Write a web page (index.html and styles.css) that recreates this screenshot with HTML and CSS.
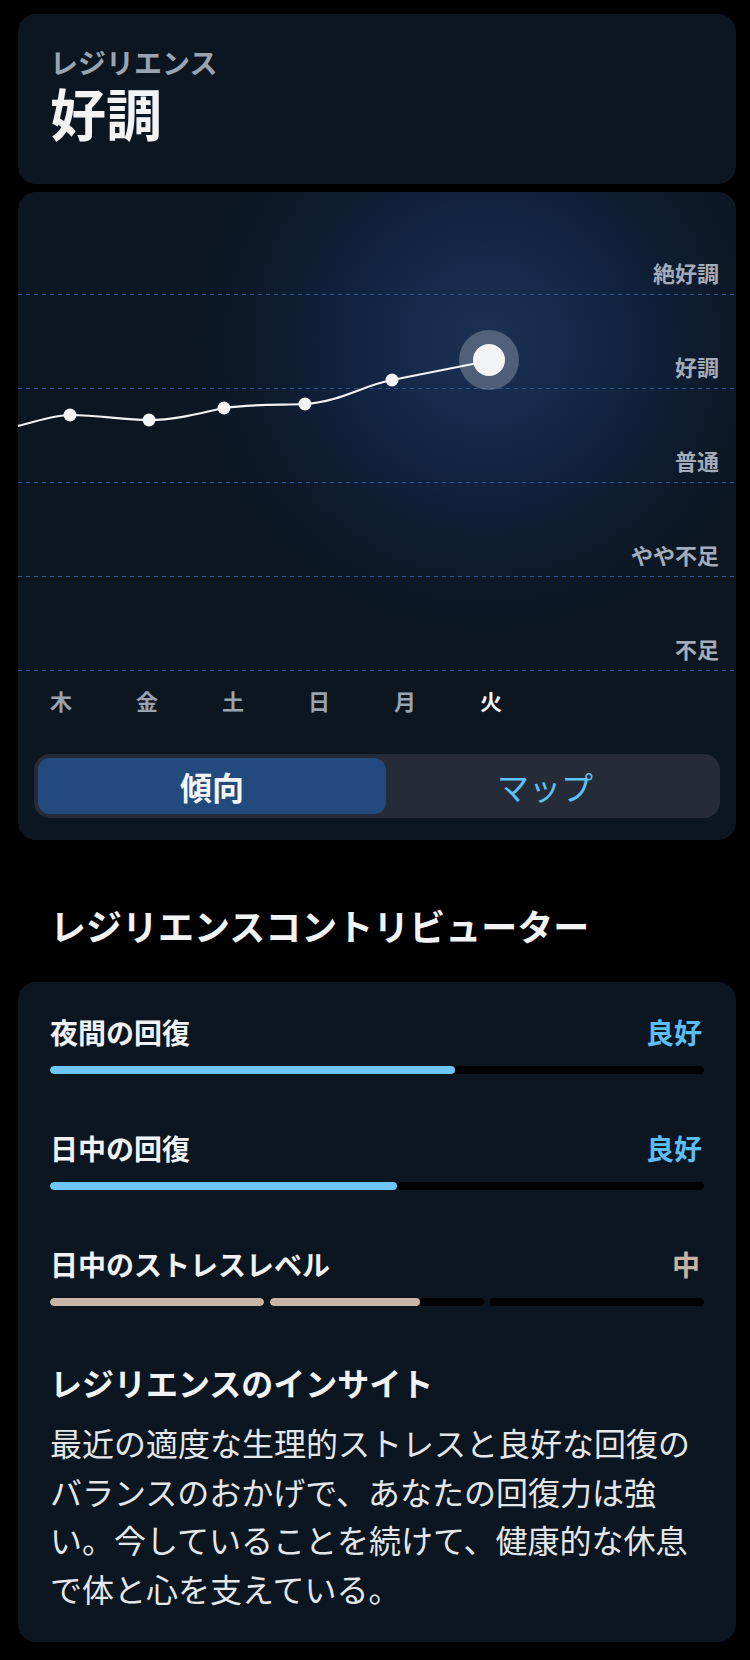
FILE: index.html
```html
<!DOCTYPE html>
<html lang="ja">
<head>
<meta charset="utf-8">
<link rel="stylesheet" href="styles.css">
</head>
<body>
<div class="page">
  <section class="card head-card">
    <div class="head-label">レジリエンス</div>
    <div class="head-value">好調</div>
  </section>

  <section class="card chart-card">
    <div class="chart">
      <div class="grid-row"><span class="grid-label">絶好調</span></div>
      <div class="grid-row"><span class="grid-label">好調</span></div>
      <div class="grid-row"><span class="grid-label">普通</span></div>
      <div class="grid-row"><span class="grid-label">やや不足</span></div>
      <div class="grid-row"><span class="grid-label">不足</span></div>
      <svg class="plot" width="718" height="500" viewBox="0 0 718 500">
        <path d="M0,234 C20,229 36,223 52,223 C82,223 104,228 131,228 C160,228 186,220 206,216 C232,212 262,213 287,212 C322,210 346,193 374,188 L470,169" fill="none" stroke="#f2f3f5" stroke-width="2.2"/>
        <circle cx="52" cy="223" r="6.5" fill="#f2f3f5"/>
        <circle cx="131" cy="228" r="6.5" fill="#f2f3f5"/>
        <circle cx="206" cy="216" r="6.5" fill="#f2f3f5"/>
        <circle cx="287" cy="212" r="6.5" fill="#f2f3f5"/>
        <circle cx="374" cy="188" r="6.5" fill="#f2f3f5"/>
        <circle cx="471" cy="168" r="30" fill="rgba(255,255,255,0.24)"/>
        <circle cx="471" cy="168" r="16" fill="#f2f3f5"/>
      </svg>
    </div>
    <div class="days">
      <span>木</span><span>金</span><span>土</span><span>日</span><span>月</span><span class="today">火</span>
    </div>
    <div class="segment">
      <div class="seg seg-active">傾向</div>
      <div class="seg seg-other">マップ</div>
    </div>
  </section>

  <h2 class="section-title">レジリエンスコントリビューター</h2>

  <section class="card contrib-card">
    <div class="metric">
      <div class="metric-top"><span class="metric-name">夜間の回復</span><span class="metric-val good">良好</span></div>
      <div class="bar"><div class="bar-fill" style="width:62%"></div></div>
    </div>
    <div class="metric">
      <div class="metric-top"><span class="metric-name">日中の回復</span><span class="metric-val good">良好</span></div>
      <div class="bar"><div class="bar-fill" style="width:53%"></div></div>
    </div>
    <div class="metric">
      <div class="metric-top"><span class="metric-name">日中のストレスレベル</span><span class="metric-val mid">中</span></div>
      <div class="seg-bars">
        <div class="bar"><div class="bar-fill tan" style="width:100%"></div></div>
        <div class="bar"><div class="bar-fill tan" style="width:70%"></div></div>
        <div class="bar"></div>
      </div>
    </div>
    <h3 class="insight-title">レジリエンスのインサイト</h3>
    <p class="insight-text">最近の適度な生理的ストレスと良好な回復のバランスのおかげで、あなたの回復力は強い。今していることを続けて、健康的な休息で体と心を支えている。</p>
  </section>
</div>
</body>
</html>
```

FILE: styles.css
```css
* { box-sizing: border-box; }
html, body { margin: 0; padding: 0; background: #000; }
body {
  font-family: "Noto Sans CJK JP", "Noto Sans", sans-serif;
  color: #f0f2f4;
  width: 750px;
  height: 1660px;
  overflow: hidden;
}
.page {
  padding: 14px 14px 0 18px;
}
.card {
  background: #0c1621;
  border-radius: 18px;
}
.head-card {
  height: 170px;
  padding: 33px 32px 0 32px;
}
.head-label {
  font-size: 28px;
  line-height: 30px;
  font-weight: 700;
  color: #9aa4b1;
}
.head-value {
  margin-top: 4px;
  font-size: 56px;
  line-height: 62px;
  font-weight: 700;
  color: #f2f3f5;
}
.chart-card {
  margin-top: 8px;
  height: 648px;
  overflow: hidden;
  background: radial-gradient(circle 330px at 468px 150px, #1c3152 0%, #16294a 25%, #10203a 50%, #0d1927 75%, #0c1621 100%);
  padding-bottom: 22px;
}
.chart {
  position: relative;
  padding-top: 9px;
}
.grid-row {
  position: relative;
  height: 94px;
  display: flex;
  justify-content: flex-end;
  align-items: flex-end;
  padding: 0 17px 10px 0;
}
.grid-row::after {
  content: "";
  position: absolute;
  left: 0; right: 0; bottom: 0;
  height: 1px;
  background: repeating-linear-gradient(to right, #2b5597 0 4px, transparent 4px 8px);
}
.grid-label {
  font-size: 22px;
  line-height: 26px;
  font-weight: 700;
  color: #a3acb8;
}
.plot {
  position: absolute;
  left: 0;
  top: 0;
}
.days {
  display: flex;
  margin-top: 16px;
  height: 26px;
}
.days span {
  width: 86px;
  text-align: center;
  font-size: 22px;
  line-height: 26px;
  font-weight: 700;
  color: #9aa3b0;
}
.days .today { color: #f2f3f5; }
.segment {
  margin: 41px 16px 0 16px;
  height: 64px;
  padding: 4px;
  background: #252c38;
  border-radius: 16px;
  display: grid;
  grid-template-columns: 348px 1fr;
}
.seg {
  display: flex;
  align-items: center;
  justify-content: center;
  font-size: 32px;
  line-height: 36px;
}
.seg-active {
  background: #234a7e;
  border-radius: 12px;
  font-weight: 700;
  color: #f4f6f8;
}
.seg-other {
  color: #5ec1f7;
  padding-right: 12px;
}
.section-title {
  margin: 64px 0 36px 32px;
  font-size: 36px;
  line-height: 42px;
  font-weight: 700;
  color: #f2f3f5;
}
.contrib-card {
  height: 660px;
  padding: 34px 32px 0 32px;
}
.metric + .metric { margin-top: 58px; }
.metric-top {
  display: flex;
  justify-content: space-between;
  align-items: center;
  height: 32px;
}
.metric-name {
  font-size: 28px;
  line-height: 32px;
  font-weight: 700;
  color: #f0f2f4;
}
.metric-val {
  font-size: 28px;
  line-height: 32px;
  font-weight: 700;
  padding-right: 2px;
}
.metric-val.good { color: #5dbdf5; }
.metric-val.mid { color: #c8b3a3; padding-right: 4px; }
.bar {
  margin-top: 18px;
  height: 8px;
  border-radius: 4px;
  background: #000;
  overflow: hidden;
}
.bar-fill {
  height: 100%;
  border-radius: 4px;
  background: #6cc6fb;
}
.bar-fill.tan { background: #c9b5a5; }
.seg-bars {
  display: grid;
  grid-template-columns: 1fr 1fr 1fr;
  gap: 6px;
  margin-top: 18px;
}
.seg-bars .bar { margin-top: 0; }
.insight-title {
  margin: 58px 0 0 0;
  font-size: 32px;
  line-height: 36px;
  font-weight: 700;
  color: #f2f3f5;
}
.insight-text {
  margin: 18px 0 0 0;
  font-size: 32px;
  line-height: 48.5px;
  font-weight: 400;
  color: #e4e7ea;
}
```
